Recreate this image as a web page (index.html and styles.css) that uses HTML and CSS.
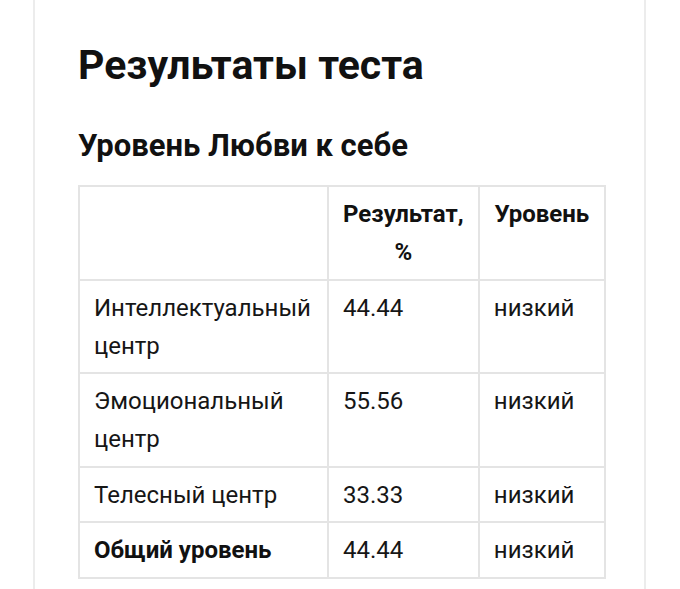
FILE: index.html
```html
<!DOCTYPE html>
<html lang="ru">
<head>
<meta charset="utf-8">
<link rel="stylesheet" href="styles.css">
</head>
<body>
<main class="card">
  <h1 class="title">Результаты теста</h1>
  <h2 class="subtitle">Уровень Любви к себе</h2>
  <table class="results">
    <colgroup>
      <col class="c1"><col class="c2"><col class="c3">
    </colgroup>
    <thead>
      <tr><th></th><th>Результат, %</th><th>Уровень</th></tr>
    </thead>
    <tbody>
      <tr><td>Интеллектуальный центр</td><td>44.44</td><td>низкий</td></tr>
      <tr><td>Эмоциональный центр</td><td>55.56</td><td>низкий</td></tr>
      <tr><td>Телесный центр</td><td>33.33</td><td>низкий</td></tr>
      <tr><td class="strong">Общий уровень</td><td>44.44</td><td>низкий</td></tr>
    </tbody>
  </table>
</main>
</body>
</html>
```

FILE: styles.css
```css
html, body {
  margin: 0;
  padding: 0;
  background: #fff;
}
body {
  font-family: Roboto, "Noto Sans", sans-serif;
  color: #161616;
  height: 589px;
  overflow: hidden;
}
.card {
  box-sizing: border-box;
  margin-left: 33px;
  width: 613px;
  min-height: 589px;
  border-left: 2px solid #ececec;
  border-right: 2px solid #ececec;
  padding: 0 0 0 43px;
}
.title {
  margin: 0;
  padding-top: 37px;
  font-size: 41px;
  line-height: 56px;
  font-weight: 700;
  color: #111;
}
.subtitle {
  margin: 0;
  padding-top: 33px;
  font-size: 31px;
  line-height: 40px;
  font-weight: 700;
  color: #111;
}
.results {
  margin-top: 19px;
  border-collapse: collapse;
  width: 528px;
  font-size: 24px;
  line-height: 38px;
}
.c1 { width: 250px; }
.c2 { width: 151px; }
.c3 { width: 127px; }
.results th,
.results td {
  border: 2px solid #e4e4e4;
  padding: 8px 14px 7.5px;
  vertical-align: top;
}
.results th {
  font-weight: 700;
  text-align: center;
  color: #111;
}
.results td {
  text-align: left;
  font-weight: 400;
}
.results td.strong {
  font-weight: 700;
  color: #111;
}
```
